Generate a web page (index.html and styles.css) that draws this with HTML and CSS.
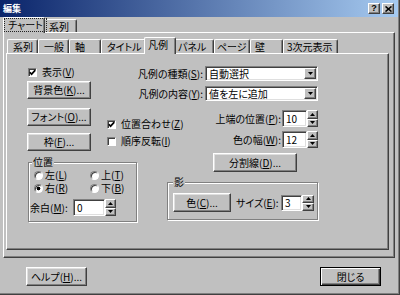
FILE: index.html
```html
<!DOCTYPE html>
<html lang="ja">
<head>
<meta charset="utf-8">
<title>編集</title>
<link rel="stylesheet" href="styles.css">
</head>
<body>
<div class="dialog">
  <div class="titlebar">
    <span class="title">編集</span>
    <div class="caption-btns">
      <span class="cap-btn">?</span>
      <span class="cap-btn"><svg width="7" height="6" viewBox="0 0 7 6"><path d="M0.5 0.5 L6.5 5.5 M6.5 0.5 L0.5 5.5" stroke="#000" stroke-width="1.6" fill="none"/></svg></span>
    </div>
  </div>

  <div class="tabs outer-tabs">
    <div class="tab sel w42"><span class="focus">チャート</span></div>
    <div class="tab w34">系列</div>
  </div>

  <div class="outer-panel">
    <div class="tabs inner-tabs">
      <div class="tab w31">系列</div>
      <div class="tab w31">一般</div>
      <div class="tab w32">軸</div>
      <div class="tab w45">タイトル</div>
      <div class="tab sel w32">凡例</div>
      <div class="tab w40 pad3">パネル</div>
      <div class="tab w36 pad2">ページ</div>
      <div class="tab w33 pad4">壁</div>
      <div class="tab w55 pad3">3次元表示</div>
    </div>

    <div class="inner-panel">
      <div class="col-left">
        <div class="check-row first"><span class="cb"><svg width="7" height="7" viewBox="0 0 7 7"><path d="M0.8 3.2 L2.6 5.2 L6.3 1.2" stroke="#000" stroke-width="1.7" fill="none"/></svg></span><span>表示(<u>V</u>)</span></div>
        <div class="btn side-btn b-bg">背景色(<u>K</u>)...</div>
        <div class="btn side-btn b-font">フォント(<u>O</u>)...</div>
        <div class="btn side-btn b-frame">枠(<u>F</u>)...</div>
        <div class="group pos-group">
          <span class="group-label">位置</span>
          <div class="radios">
            <div class="radio-item"><span class="radio"></span><span>左(<u>L</u>)</span></div>
            <div class="radio-item"><span class="radio"></span><span>上(<u>T</u>)</span></div>
            <div class="radio-item"><span class="radio on"></span><span>右(<u>R</u>)</span></div>
            <div class="radio-item"><span class="radio"></span><span>下(<u>B</u>)</span></div>
          </div>
          <div class="margin-row">
            <span class="margin-lbl">余白(<u>M</u>):</span>
            <div class="spin">
              <span class="field spin-input wide">0</span>
              <span class="spin-btns">
                <span class="sb"><svg width="5" height="3" viewBox="0 0 5 3"><path d="M2.5 0 L5 3 L0 3 Z" fill="#000"/></svg></span>
                <span class="sb"><svg width="5" height="3" viewBox="0 0 5 3"><path d="M0 0 L5 0 L2.5 3 Z" fill="#000"/></svg></span>
              </span>
            </div>
          </div>
        </div>
      </div>

      <div class="col-right">
        <div class="field-row">
          <span class="lbl">凡例の種類(<u>S</u>):</span>
          <div class="field select"><span class="select-text">自動選択</span><span class="drop"><svg width="5" height="3" viewBox="0 0 5 3"><path d="M0 0 L5 0 L2.5 3 Z" fill="#000"/></svg></span></div>
        </div>
        <div class="field-row second">
          <span class="lbl">凡例の内容(<u>Y</u>):</span>
          <div class="field select"><span class="select-text">値を左に追加</span><span class="drop"><svg width="5" height="3" viewBox="0 0 5 3"><path d="M0 0 L5 0 L2.5 3 Z" fill="#000"/></svg></span></div>
        </div>
        <div class="mid">
          <div class="checks">
            <div class="check-row"><span class="cb"><svg width="7" height="7" viewBox="0 0 7 7"><path d="M0.8 3.2 L2.6 5.2 L6.3 1.2" stroke="#000" stroke-width="1.7" fill="none"/></svg></span><span>位置合わせ(<u>Z</u>)</span></div>
            <div class="check-row c2"><span class="cb"></span><span>順序反転(<u>I</u>)</span></div>
          </div>
          <div class="spins">
            <div class="spin-row">
              <span class="lbl">上端の位置(<u>P</u>):</span>
              <div class="spin">
                <span class="field spin-input">10</span>
                <span class="spin-btns">
                  <span class="sb"><svg width="5" height="3" viewBox="0 0 5 3"><path d="M2.5 0 L5 3 L0 3 Z" fill="#000"/></svg></span>
                  <span class="sb"><svg width="5" height="3" viewBox="0 0 5 3"><path d="M0 0 L5 0 L2.5 3 Z" fill="#000"/></svg></span>
                </span>
              </div>
            </div>
            <div class="spin-row">
              <span class="lbl">色の幅(<u>W</u>):</span>
              <div class="spin">
                <span class="field spin-input">12</span>
                <span class="spin-btns">
                  <span class="sb"><svg width="5" height="3" viewBox="0 0 5 3"><path d="M2.5 0 L5 3 L0 3 Z" fill="#000"/></svg></span>
                  <span class="sb"><svg width="5" height="3" viewBox="0 0 5 3"><path d="M0 0 L5 0 L2.5 3 Z" fill="#000"/></svg></span>
                </span>
              </div>
            </div>
          </div>
        </div>
        <div class="btn divider-btn">分割線(<u>D</u>)...</div>
        <div class="group shadow-group">
          <span class="group-label">影</span>
          <div class="shadow-row">
            <div class="btn color-btn">色(<u>C</u>)...</div>
            <span class="size-lbl">サイズ(<u>E</u>):</span>
            <div class="spin small">
              <span class="field spin-input">3</span>
              <span class="spin-btns">
                <span class="sb"><svg width="5" height="3" viewBox="0 0 5 3"><path d="M2.5 0 L5 3 L0 3 Z" fill="#000"/></svg></span>
                <span class="sb"><svg width="5" height="3" viewBox="0 0 5 3"><path d="M0 0 L5 0 L2.5 3 Z" fill="#000"/></svg></span>
              </span>
            </div>
          </div>
        </div>
      </div>
    </div>
  </div>

  <div class="footer">
    <div class="btn foot-btn">ヘルプ(<u>H</u>)...</div>
    <div class="btn foot-btn default">閉じる</div>
  </div>
</div>
</body>
</html>
```
FILE: styles.css
```css
* { box-sizing: border-box; margin: 0; padding: 0; }
html, body { width: 400px; height: 295px; overflow: hidden; }
body {
  background: #c0c0c0;
  color: #000;
  font-family: "Noto Sans CJK JP", "Noto Sans", sans-serif;
  font-size: 10px;
  line-height: 12px;
  font-feature-settings: "palt" 1;
}
u { text-decoration: underline; text-underline-offset: 1px; text-decoration-thickness: 1px; }

.dialog {
  width: 400px; height: 295px;
  border-right: 1px solid #404040;
  border-bottom: 1px solid #404040;
  box-shadow: inset -1px -1px #808080;
  display: flex; flex-direction: column;
}

/* title bar */
.titlebar {
  height: 17px; margin-right: 1px; flex: none;
  display: flex; align-items: center;
  padding: 0 4px 0 3px;
  background: linear-gradient(90deg, #0a246a, #a6caf0);
  color: #fff;
}
.title { font-size: 9px; font-weight: bold; line-height: 12px; }
.caption-btns { margin-left: auto; display: flex; gap: 2px; }
.cap-btn {
  width: 12px; height: 11px;
  display: flex; align-items: center; justify-content: center;
  background: #c0c0c0; color: #000;
  border: 1px solid; border-color: #fff #404040 #404040 #fff;
  box-shadow: inset -1px -1px #808080;
  font: bold 9px/9px "Liberation Sans", sans-serif;
}

/* tabs */
.tabs { display: flex; align-items: flex-end; flex: none; }
.outer-tabs { height: 15px; padding-left: 5px; }
.inner-tabs { height: 16px; padding-left: 1px; }
.tab {
  height: 14px; flex: none;
  border: 1px solid; border-bottom: 0;
  border-color: #fff #404040 #fff #fff;
  border-radius: 2px 2px 0 0;
  box-shadow: inset -1px 0 #808080;
  padding: 1px 0 0 5px;
  white-space: nowrap; line-height: 12px;
  background: #c0c0c0;
}
.tab.pad2 { padding-left: 2px; }
.tab.pad3 { padding-left: 3px; }
.tab.pad4 { padding-left: 4px; }
.outer-tabs .tab { height: 13px; }
.tab.sel {
  height: 17px; margin: 0 -2px -1px;
  padding: 1px 0 0 3px;
  position: relative; z-index: 1;
}
.outer-tabs .tab.sel { height: 16px; padding-left: 1px; }
.focus { display: inline-block; padding: 0 3px; outline: 1px dotted #222; }
.w31 { width: 31px; } .w32 { width: 32px; } .w33 { width: 33px; } .w34 { width: 34px; }
.w36 { width: 36px; } .w40 { width: 40px; } .w42 { width: 42px; } .w45 { width: 45px; }
.w55 { width: 55px; }

/* panels */
.outer-panel {
  margin-left: 3px; width: 392px; height: 226px; flex: none;
  border: 1px solid; border-color: #fff #404040 #404040 #fff;
  box-shadow: inset -1px -1px #808080;
  padding: 4px 5px 0 2px;
}
.inner-panel {
  width: 383px; height: 197px;
  border: 1px solid; border-color: #fff #404040 #404040 #fff;
  box-shadow: inset -1px -1px #808080;
  display: flex; align-items: flex-start;
  padding: 12px 0 0 20px;
}

/* controls */
.btn {
  display: flex; align-items: center; justify-content: center;
  background: #c0c0c0; white-space: nowrap;
  border: 1px solid; border-color: #fff #404040 #404040 #fff;
  box-shadow: inset -1px -1px #808080, inset 1px 1px #dfdfdf;
}
.field {
  background: #fff;
  border: 1px solid; border-color: #808080 #fff #fff #808080;
  box-shadow: inset 1px 1px #404040, inset -1px -1px #dfdfdf;
}
.check-row { height: 10px; display: flex; align-items: center; gap: 5px; white-space: nowrap; }
.cb {
  width: 9px; height: 9px; flex: none; background: #fff;
  border: 1px solid; border-color: #808080 #fff #fff #808080;
  box-shadow: inset 1px 1px #404040;
  display: flex; align-items: center; justify-content: center;
}
.radio {
  width: 9px; height: 9px; flex: none; border-radius: 50%;
  border: 1px solid; border-color: #808080 #fff #fff #808080;
  background: #fff; box-shadow: inset 1px 1px #404040;
}
.radio.on { background: radial-gradient(circle, #000 0 1.6px, #fff 2.2px); }

/* left column */
.col-left { flex: 0 0 80px; min-width: 0; display: flex; flex-direction: column; align-items: flex-start; }
.check-row.first { margin: 1px 0 0 1px; }
.side-btn { width: 64px; height: 18px; }
.b-bg { margin-top: 4px; }
.b-font { margin-top: 9px; }
.b-frame { margin-top: 7px; }

.group {
  border: 1px solid #808080;
  box-shadow: inset 1px 1px #fff, 1px 1px #fff;
}
.group-label {
  display: block; width: max-content;
  margin: -7px 0 0 2px; padding: 0 1px;
  height: 12px; line-height: 12px; background: #c0c0c0;
}
.pos-group { margin: 11px 0 0 1px; width: 109px; height: 60px; flex: none; padding-left: 1px; }
.radios {
  display: grid; grid-template-columns: 56px auto;
  grid-auto-rows: 12px; row-gap: 1px;
  margin: 1px 0 0 4px;
}
.radio-item { display: flex; align-items: center; gap: 2px; white-space: nowrap; }
.margin-row { display: flex; align-items: center; height: 17px; margin-top: 5px; }
.margin-lbl { width: 43px; flex: none; white-space: nowrap; }

/* spin */
.spin { display: flex; flex: none; }
.spin-input { width: 25px; height: 17px; padding-left: 3px; line-height: 15px; }
.spin-input.wide { width: 32px; }
.spin-btns { width: 11px; height: 17px; display: flex; flex-direction: column; }
.sb {
  flex: 1; display: flex; align-items: center; justify-content: center;
  background: #c0c0c0;
  border: 1px solid; border-color: #fff #404040 #404040 #fff;
  box-shadow: inset -1px -1px #808080;
}
.spin.small .spin-input { width: 21px; height: 16px; line-height: 14px; }
.spin.small .spin-btns { width: 12px; height: 16px; }

/* right column */
.col-right { flex: 0 0 211px; display: flex; flex-direction: column; align-items: flex-start; }
.field-row { width: 211px; height: 15px; display: flex; align-items: center; }
.field-row.second { margin-top: 5px; }
.lbl { flex: 1; text-align: right; padding-right: 2px; white-space: nowrap; }
.select { width: 113px; height: 15px; flex: none; display: flex; align-items: center; padding: 1px; }
.select-text { flex: 1; padding-left: 2px; line-height: 12px; white-space: nowrap; }
.drop {
  width: 12px; height: 11px; flex: none;
  display: flex; align-items: center; justify-content: center;
  background: #c0c0c0;
  border: 1px solid; border-color: #fff #404040 #404040 #fff;
  box-shadow: inset -1px -1px #808080;
}
.mid { width: 211px; display: flex; margin-top: 9px; }
.checks { flex: none; padding-top: 9px; }
.check-row.c2 { margin-top: 7px; }
.spins { flex: 1; display: flex; flex-direction: column; gap: 4px; }
.spin-row { height: 17px; display: flex; align-items: center; justify-content: flex-end; }
.spin-row .lbl { padding-right: 1px; }
.divider-btn { width: 84px; height: 19px; margin: 5px 0 0 106px; }
.shadow-group { width: 151px; height: 38px; margin: 10px 0 0 60px; padding-left: 5px; }
.shadow-group .group-label { margin-left: 0; }
.shadow-row { display: flex; align-items: center; margin-top: 5px; }
.color-btn { width: 58px; height: 19px; }
.size-lbl { width: 45px; margin-left: 5px; white-space: nowrap; }

/* footer */
.footer {
  display: flex; justify-content: space-between;
  margin-top: 9px; padding: 0 18px 0 26px;
}
.foot-btn { width: 61px; height: 19px; }
.foot-btn.default {
  border: 1px solid #000;
  box-shadow: inset 1px 1px #fff, inset -1px -1px #404040, inset -2px -2px #808080;
}
```
